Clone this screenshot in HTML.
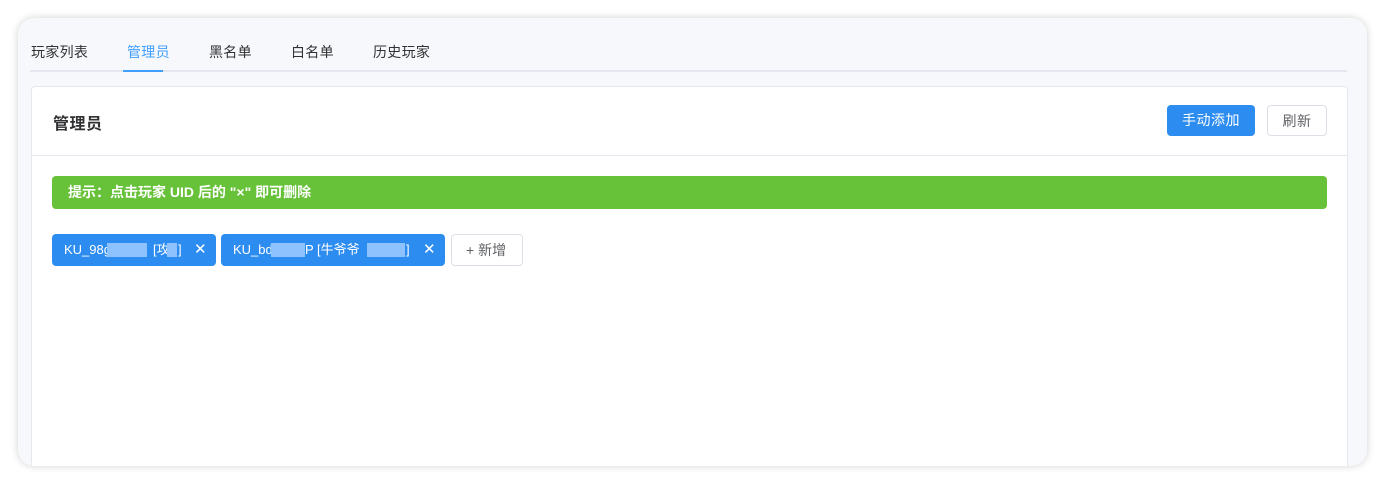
<!DOCTYPE html>
<html><head><meta charset="utf-8"><style>
body{margin:0;width:1386px;height:485px;background:#fff;font-family:"Liberation Sans","Noto Sans CJK SC",sans-serif;overflow:hidden;position:relative}
.win{position:absolute;left:18px;top:18px;width:1349px;height:448px;background:#f7f8fb;border-radius:16px;box-shadow:0 0 8px rgba(0,0,0,.18);overflow:hidden}
.tab{position:absolute;top:24px;font-size:14px;color:#303133;line-height:20px;letter-spacing:.3px}
.line{position:absolute;left:12px;top:52px;width:1317px;height:2px;background:#e4e7ed}
.act{position:absolute;left:105px;top:52px;width:40px;height:2px;background:#409eff}
.card{position:absolute;left:13px;top:68px;width:1315px;height:400px;background:#fff;border:1px solid #e4e7ed;border-radius:4px}
.title{position:absolute;left:21px;top:23px;font-size:16px;color:#303133;font-weight:bold;letter-spacing:.5px}
.hdr{position:absolute;left:0;top:68px;width:100%;height:1px;background:#e4e7ed}
.btn{position:absolute;top:18px;height:31px;border-radius:4px;font-size:14px;line-height:31px;text-align:center;box-sizing:border-box;letter-spacing:.5px}
.tip{position:absolute;left:20px;top:89px;width:1275px;height:33px;background:#67c23a;border-radius:4px;color:#fff;font-size:14px;line-height:33px;padding-left:16px;box-sizing:border-box;font-weight:bold;letter-spacing:0}
.tag{position:absolute;top:147px;height:32px;background:#2d8cf0;border-radius:4px;color:#fff;font-size:13px;line-height:32px;box-sizing:border-box}
.tag span{position:absolute;top:0;white-space:nowrap}
.blur{position:absolute;top:9px;height:14px;background:#8ec2ff}
.x{font-size:15px;font-weight:100}
</style></head><body>
<div class="win">
<div class="tab" style="left:13px">玩家列表</div>
<div class="tab" style="left:109px;color:#409eff">管理员</div>
<div class="tab" style="left:191px">黑名单</div>
<div class="tab" style="left:273px">白名单</div>
<div class="tab" style="left:355px">历史玩家</div>
<div class="line"></div><div class="act"></div>
<div class="card">
<div class="title">管理员</div>
<div class="btn" style="left:1135px;width:88px;background:#2d8cf0;color:#fff">手动添加</div>
<div class="btn" style="left:1235px;width:60px;border:1px solid #dcdfe6;color:#606266">刷新</div>
<div class="hdr"></div>
<div class="tip">提示：点击玩家 UID 后的 "×" 即可删除</div>
<div class="tag" style="left:20px;width:164px"><span style="left:12px">KU_98g</span><span style="left:101px">[攻</span><span style="left:126px">]</span><div class="blur" style="left:55px;width:40px"></div><div class="blur" style="left:115px;width:10px"></div><span class="x" style="left:142px">✕</span></div>
<div class="tag" style="left:189px;width:224px"><span style="left:12px">KU_bd</span><span style="left:84px">P [牛爷爷</span><span style="left:185px">]</span><div class="blur" style="left:50px;width:34px"></div><div class="blur" style="left:146px;width:38px"></div><span class="x" style="left:202px">✕</span></div>
<div class="tag" style="left:419px;width:72px;background:#fff;border:1px solid #dcdfe6;color:#606266;font-size:14px;line-height:30px;padding-left:14px">+ 新增</div>
</div>
</div>
</body></html>
